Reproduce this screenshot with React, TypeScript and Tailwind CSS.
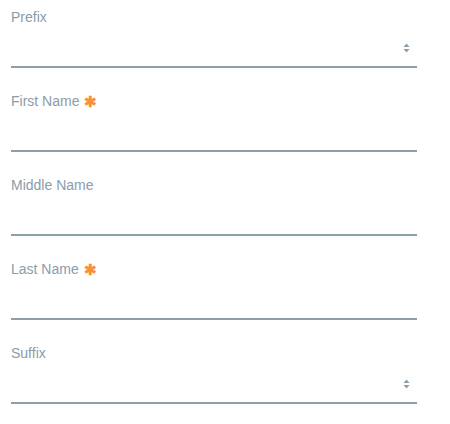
import React from "react"

type Field = { label: string; required?: boolean; select?: boolean }

const fields: Field[] = [
  { label: "Prefix", select: true },
  { label: "First Name", required: true },
  { label: "Middle Name" },
  { label: "Last Name", required: true },
  { label: "Suffix", select: true },
]

function SortArrows() {
  return (
    <svg width="7" height="10" viewBox="0 0 7 10" className="absolute right-[7px] top-[18px]">
      <path d="M3.5 0.5 L6.5 4 L0.5 4 Z" fill="#8d9fad" />
      <path d="M0.5 6 L6.5 6 L3.5 9.5 Z" fill="#8d9fad" />
    </svg>
  )
}

export default function App() {
  return (
    <div
      className="min-h-[424px] w-[450px] bg-white pl-[11px] pt-[8px]"
      style={{ fontFamily: '"Liberation Sans", Arial, sans-serif' }}
    >
      {fields.map((f) => (
        <div key={f.label} className="mb-[24px] w-[406px]">
          <label className="flex h-[17px] items-end gap-[5px] text-[14px] leading-[15px] text-[#8b9cab]">
            {f.label}
            {f.required && <span className="text-[15px] font-bold text-[#f7923a]">✱</span>}
          </label>
          <div className="relative h-[43px] border-b-2 border-[#8d9eab]">
            {f.select && <SortArrows />}
          </div>
        </div>
      ))}
    </div>
  )
}
